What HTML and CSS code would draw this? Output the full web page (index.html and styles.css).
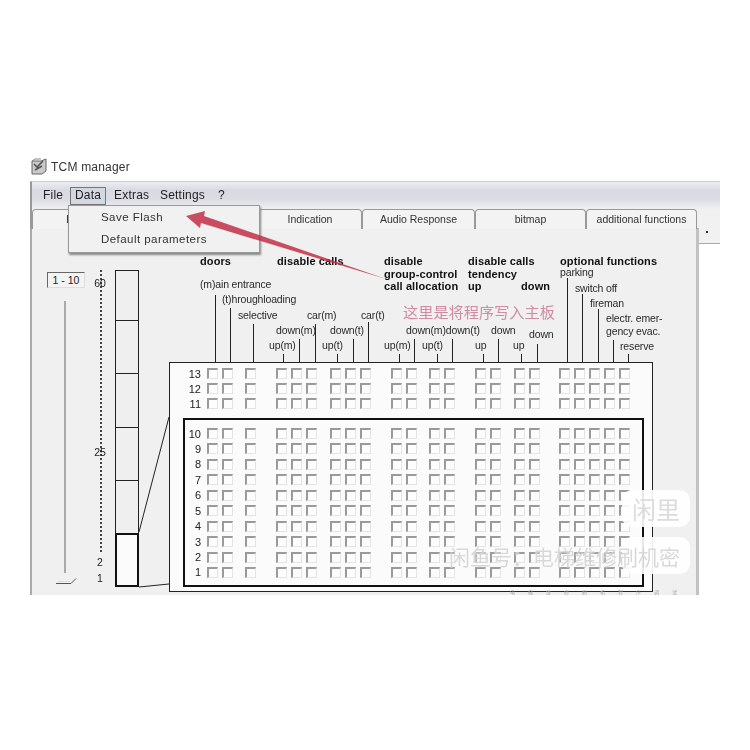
FILE: index.html
```html
<!DOCTYPE html>
<html lang="en">
<head>
<meta charset="utf-8">
<title>TCM manager</title>
<link rel="stylesheet" href="styles.css">
</head>
<body>
<div class="page">
  <header class="title">
    <svg class="app-icon" viewBox="0 0 17 17" width="17" height="17"><path d="M1 3h9l5-2v12l-4 3H1z" fill="#c9c9c9" stroke="#666"/><path d="M3 6l3 3 6-6M4 12l7-4" fill="none" stroke="#555" stroke-width="1.6"/><path d="M1 3l3-2h6" fill="none" stroke="#888"/></svg>
    <span>TCM manager</span>
  </header>
  <div class="window">
    <nav class="menubar">
      <span class="m-file">File</span>
      <span class="m-data">Data</span>
      <span class="m-extras">Extras</span>
      <span class="m-settings">Settings</span>
      <span class="m-help">?</span>
    </nav>
    <div class="body">
      <div class="main">
        <div class="tabs">
          <div class="tab t1">I</div>
          <div class="tab t2"></div>
          <div class="tab t3">Indication</div>
          <div class="tab t4">Audio Response</div>
          <div class="tab t5">bitmap</div>
          <div class="tab t6">additional functions</div>
        </div>
        <section class="panel">
          <div class="range">
            <div class="range-box">1 - 10</div>
            <div class="track"></div>
            <svg class="thumb" viewBox="0 0 21 8" width="21" height="8"><path d="M0 5.500H15L20 .5" fill="none" stroke="#555"/><path d="M2 3.500H14" stroke="#ddd"/></svg>
          </div>
          <div class="scale">
            <span class="s60">60</span><span class="s25">25</span><span class="s2">2</span><span class="s1">1</span>
          </div>
          <div class="bar">
            <div class="seg h50"></div><div class="seg h53"></div><div class="seg h54"></div><div class="seg h53"></div><div class="seg h53"></div><div class="seg active"></div>
          </div>
          <div class="matrix">
            <div class="row top"><span class="n">13</span><i></i><i></i><i></i><i></i><i></i><i></i><i></i><i></i><i></i><i></i><i></i><i></i><i></i><i></i><i></i><i></i><i></i><i></i><i></i><i></i><i></i><i></i></div>
            <div class="row top"><span class="n">12</span><i></i><i></i><i></i><i></i><i></i><i></i><i></i><i></i><i></i><i></i><i></i><i></i><i></i><i></i><i></i><i></i><i></i><i></i><i></i><i></i><i></i><i></i></div>
            <div class="row top"><span class="n">11</span><i></i><i></i><i></i><i></i><i></i><i></i><i></i><i></i><i></i><i></i><i></i><i></i><i></i><i></i><i></i><i></i><i></i><i></i><i></i><i></i><i></i><i></i></div>
            <div class="selected">
              <div class="row"><span class="n">10</span><i></i><i></i><i></i><i></i><i></i><i></i><i></i><i></i><i></i><i></i><i></i><i></i><i></i><i></i><i></i><i></i><i></i><i></i><i></i><i></i><i></i><i></i></div>
              <div class="row"><span class="n">9</span><i></i><i></i><i></i><i></i><i></i><i></i><i></i><i></i><i></i><i></i><i></i><i></i><i></i><i></i><i></i><i></i><i></i><i></i><i></i><i></i><i></i><i></i></div>
              <div class="row"><span class="n">8</span><i></i><i></i><i></i><i></i><i></i><i></i><i></i><i></i><i></i><i></i><i></i><i></i><i></i><i></i><i></i><i></i><i></i><i></i><i></i><i></i><i></i><i></i></div>
              <div class="row"><span class="n">7</span><i></i><i></i><i></i><i></i><i></i><i></i><i></i><i></i><i></i><i></i><i></i><i></i><i></i><i></i><i></i><i></i><i></i><i></i><i></i><i></i><i></i><i></i></div>
              <div class="row"><span class="n">6</span><i></i><i></i><i></i><i></i><i></i><i></i><i></i><i></i><i></i><i></i><i></i><i></i><i></i><i></i><i></i><i></i><i></i><i></i><i></i><i></i><i></i><i></i></div>
              <div class="row"><span class="n">5</span><i></i><i></i><i></i><i></i><i></i><i></i><i></i><i></i><i></i><i></i><i></i><i></i><i></i><i></i><i></i><i></i><i></i><i></i><i></i><i></i><i></i><i></i></div>
              <div class="row"><span class="n">4</span><i></i><i></i><i></i><i></i><i></i><i></i><i></i><i></i><i></i><i></i><i></i><i></i><i></i><i></i><i></i><i></i><i></i><i></i><i></i><i></i><i></i><i></i></div>
              <div class="row"><span class="n">3</span><i></i><i></i><i></i><i></i><i></i><i></i><i></i><i></i><i></i><i></i><i></i><i></i><i></i><i></i><i></i><i></i><i></i><i></i><i></i><i></i><i></i><i></i></div>
              <div class="row"><span class="n">2</span><i></i><i></i><i></i><i></i><i></i><i></i><i></i><i></i><i></i><i></i><i></i><i></i><i></i><i></i><i></i><i></i><i></i><i></i><i></i><i></i><i></i><i></i></div>
              <div class="row"><span class="n">1</span><i></i><i></i><i></i><i></i><i></i><i></i><i></i><i></i><i></i><i></i><i></i><i></i><i></i><i></i><i></i><i></i><i></i><i></i><i></i><i></i><i></i><i></i></div>
            </div>
          </div>
        </section>
      </div>
      <div class="side"><b class="dot"></b></div>
    </div>
  </div>

  <!-- diagram overlay: labels and leader lines, placed on the page's own coordinates -->
  <div class="canvas">
    <svg class="wires" viewBox="0 0 750 750" width="750" height="750">
      <g stroke="#222" stroke-width="1" fill="none">
        <path d="M215.500 295V362M230.500 308V362M253.500 324V362M283.500 354V362M299.500 339V362M315.500 324V362M337.500 354V362M353.500 339V362M368.500 322V362"/>
        <path d="M399.500 354V362M414.500 339V362M437.500 354V362M452.500 339V362M483.500 354V362M498.500 339V362M521.500 354V362M537.500 344V362"/>
        <path d="M567.500 278V362M582.500 294V362M598.500 309V362M613.500 340V362M628.500 354V362"/>
        <path d="M139 532L169 417M139 587L169 584"/>
      </g>
    </svg>
    <b class="h doors">doors</b>
    <b class="h dis1">disable calls</b>
    <b class="h dis2">disable<br>group-control<br>call allocation</b>
    <b class="h dis3">disable calls<br>tendency<br>up</b>
    <b class="h dn">down</b>
    <b class="h opt">optional functions</b>
    <span class="l a1">(m)ain entrance</span>
    <span class="l a2">(t)hroughloading</span>
    <span class="l a3">selective</span>
    <span class="l a4">car(m)</span>
    <span class="l a5">car(t)</span>
    <span class="l a6">down(m)</span>
    <span class="l a7">down(t)</span>
    <span class="l a8">up(m)</span>
    <span class="l a9">up(t)</span>
    <span class="l b1">up(m)</span>
    <span class="l b2">down(m)down(t)</span>
    <span class="l b3">up(t)</span>
    <span class="l b4">down</span>
    <span class="l b5">up</span>
    <span class="l b6">down</span>
    <span class="l b7">up</span>
    <span class="l c1">parking</span>
    <span class="l c2">switch off</span>
    <span class="l c3">fireman</span>
    <span class="l c4">electr. emer-<br>gency evac.</span>
    <span class="l c5">reserve</span>
    <div class="note">这里是将程序写入主板</div>
  </div>

  <div class="dropdown">
    <div>Save Flash</div>
    <div>Default parameters</div>
  </div>

  <svg class="arrow" viewBox="0 0 750 750" width="750" height="750"><path d="M186 216L205 211L204 216L386 279L201 223L200 228Z" fill="#c32f47" fill-opacity=".85"/></svg>

  <div class="wm wm1">闲里</div>
  <div class="wm wm2"></div>
  <div class="wm-text">闲鱼号：电梯维修刷机密</div>
  <div class="wm-foot">电梯维修刷机程序调试</div>
</div>
</body>
</html>
```
FILE: styles.css
```css
* { box-sizing: border-box; }
html, body { margin: 0; background: #fff; }
.page {
  position: relative;
  width: 750px;
  height: 750px;
  padding: 158px 0 0 30px;
  overflow: hidden;
  font-family: "Liberation Sans", Arial, sans-serif;
  color: #222;
  filter: blur(.4px);
}
.title {
  height: 23px;
  display: flex;
  align-items: flex-start;
  gap: 3px;
  font-size: 12px;
  line-height: 18px;
  letter-spacing: .2px;
  color: #333;
}
.app-icon { margin-left: 1px; }
.window { width: 690px; }
.menubar {
  height: 28px;
  position: relative;
  font-size: 12px;
  letter-spacing: .2px;
  border-top: 1px solid #ccc;
  border-left: 2px solid #999;
  background: linear-gradient(#eceef2 0, #d9d9e3 30%, #dcdce4 65%, #efeff2 100%);
}
.menubar span { position: absolute; top: 6px; }
.m-file { left: 11px; }
.m-data {
  left: 38px;
  top: 5px !important;
  padding: 0 4px 2px;
  border: 1px solid #777;
  background: #d3d7e2;
}
.m-extras { left: 82px; }
.m-settings { left: 128px; }
.m-help { left: 186px; }
.body { display: flex; align-items: flex-start; }
.main { width: 669px; }
.side {
  width: 21px;
  height: 35px;
  position: relative;
  background: #f1f1f1;
  border-bottom: 1px solid #aaa;
}
.dot {
  position: absolute;
  left: 7px;
  top: 22px;
  width: 2px;
  height: 2px;
  background: #333;
}
.tabs {
  display: flex;
  height: 19px;
  background: #efefef;
  border-left: 2px solid #999;
}
.tab {
  height: 20px;
  flex: none;
  text-align: center;
  font-size: 10.500px;
  line-height: 19px;
  color: #333;
  background: #f3f3f3;
  border: 1px solid #999;
  border-bottom: 0;
  border-radius: 4px 4px 0 0;
}
.t1 { width: 113px; text-align: left; padding-left: 33px; }
.t2 { width: 113px; }
.t3 { width: 104px; }
.t4 { width: 113px; }
.t5 { width: 111px; }
.t6 { width: 111px; }
.panel {
  height: 367px;
  display: flex;
  align-items: flex-start;
  background: #f0f0f0;
  border-top: 1px solid #999;
  border-left: 2px solid #aaa;
  border-right: 3px solid #c2c2c2;
}
.range { width: 38px; margin: 43px 0 0 15px; position: relative; }
.range-box {
  height: 16px;
  font-size: 10.500px;
  line-height: 15px;
  text-align: center;
  background: #f3f3f3;
  border-top: 1px solid #666;
  border-left: 1px solid #666;
  border-right: 1px solid #ddd;
  border-bottom: 1px solid #ddd;
}
.track { width: 2px; height: 272px; margin: 13px 0 0 17px; background: #aaa; }
.thumb { position: absolute; left: 9px; top: 306px; }
.scale {
  position: relative;
  width: 16px;
  height: 282px;
  margin: 41px 0 0 7px;
  font-size: 10.500px;
}
.scale::before {
  content: "";
  position: absolute;
  left: 8px;
  top: 0;
  height: 100%;
  border-left: 2px dotted #444;
}
.scale span { position: absolute; left: 0; width: 100%; text-align: center; line-height: 12px; }
.s60 { top: 7px; }
.s25 { top: 176px; }
.s2 { top: 286px; }
.s1 { top: 302px; }
.bar {
  width: 24px;
  height: 317px;
  margin: 41px 0 0 7px;
  display: flex;
  flex-direction: column;
}
.seg { border: 1px solid #222; border-bottom: 0; background: #efefef; }
.h50 { height: 50px; }
.h53 { height: 53px; }
.h54 { height: 54px; }
.seg.active { height: 54px; border: 2px solid #111; background: #fbfbfb; }
.matrix {
  width: 484px;
  height: 230px;
  margin: 133px 0 0 30px;
  padding: 3px 8px 4px 13px;
  background: #fbfbfb;
  border: 1px solid #222;
}
.selected {
  height: 169px;
  margin-top: 7px;
  padding-top: 5.800px;
  border: 2px solid #111;
}
.row {
  display: flex;
  align-items: center;
  gap: 4px;
  height: 15.440px;
  font-size: 11px;
  color: #222;
}
.row.top { height: 15px; margin-left: 2px; }
.n { width: 16px; margin-right: 2px; text-align: right; line-height: 12px; }
.row i {
  width: 11px;
  height: 11px;
  flex: none;
  background: #fdfdfd;
  border-top: 2px solid #9a9a9a;
  border-left: 2px solid #9a9a9a;
  border-right: 1px solid #e4e4e4;
  border-bottom: 1px solid #e4e4e4;
}
.row i:nth-of-type(3), .row i:nth-of-type(12) { margin-left: 8px; }
.row i:nth-of-type(4), .row i:nth-of-type(10), .row i:nth-of-type(14) { margin-left: 16px; }
.row i:nth-of-type(7), .row i:nth-of-type(16) { margin-left: 9px; }
.row i:nth-of-type(18) { margin-left: 15px; }

.canvas { position: absolute; inset: 0; }
.wires, .arrow { position: absolute; left: 0; top: 0; }
.h, .l { position: absolute; white-space: nowrap; }
.h { font-size: 11px; line-height: 12.500px; letter-spacing: .1px; color: #111; font-weight: 700; }
.l { font-size: 10.500px; line-height: 12px; letter-spacing: -.15px; color: #2a2a2a; }
.doors { left: 200px; top: 255px; }
.dis1 { left: 277px; top: 255px; }
.dis2 { left: 384px; top: 255px; }
.dis3 { left: 468px; top: 255px; }
.dn { left: 521px; top: 280px; }
.opt { left: 560px; top: 255px; }
.a1 { left: 200px; top: 278px; }
.a2 { left: 222px; top: 293px; }
.a3 { left: 238px; top: 309px; }
.a4 { left: 307px; top: 309px; }
.a5 { left: 361px; top: 309px; }
.a6 { left: 276px; top: 324px; }
.a7 { left: 330px; top: 324px; }
.a8 { left: 269px; top: 339px; }
.a9 { left: 322px; top: 339px; }
.b1 { left: 384px; top: 339px; }
.b2 { left: 406px; top: 324px; }
.b3 { left: 422px; top: 339px; }
.b4 { left: 491px; top: 324px; }
.b5 { left: 475px; top: 339px; }
.b6 { left: 529px; top: 328px; }
.b7 { left: 513px; top: 339px; }
.c1 { left: 560px; top: 266px; }
.c2 { left: 575px; top: 282px; }
.c3 { left: 590px; top: 297px; }
.c4 { left: 606px; top: 312px; line-height: 13px; }
.c5 { left: 620px; top: 340px; }
.note {
  position: absolute;
  left: 403px;
  top: 302px;
  font-family: "Noto Sans CJK SC", sans-serif;
  font-size: 15.200px;
  line-height: 18px;
  color: #d08ba0;
}
.dropdown {
  position: absolute;
  left: 68px;
  top: 205px;
  width: 192px;
  height: 48px;
  padding: 1px 0 0 32px;
  font-size: 11.500px;
  line-height: 21.500px;
  letter-spacing: .45px;
  color: #333;
  background: #f1f1f1;
  border: 1px solid #999;
  box-shadow: 1px 2px 2px #888;
}
.wm {
  position: absolute;
  left: 622px;
  width: 68px;
  height: 37px;
  border-radius: 10px;
  background: rgba(255, 255, 255, .9);
  font-family: "Noto Sans CJK SC", sans-serif;
  font-size: 24px;
  line-height: 37px;
  text-align: center;
  color: #dcdcdc;
}
.wm1 { top: 490px; }
.wm2 { top: 537px; }
.wm-text {
  position: absolute;
  left: 449px;
  top: 544px;
  font-family: "Noto Sans CJK SC", sans-serif;
  font-size: 21px;
  line-height: 24px;
  color: rgba(200, 200, 200, .7);
  text-shadow: 0 0 2px #fff;
  white-space: nowrap;
}
.wm-foot {
  position: absolute;
  left: 510px;
  top: 589px;
  width: 180px;
  font-family: "Noto Sans CJK SC", sans-serif;
  font-size: 5px;
  line-height: 6px;
  letter-spacing: 13px;
  color: #a8a8a8;
  white-space: nowrap;
}
```
